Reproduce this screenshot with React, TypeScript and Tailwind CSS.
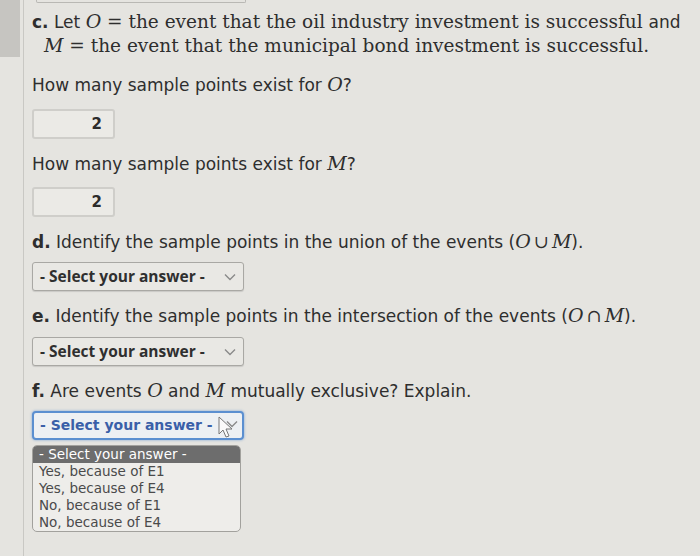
import React from 'react';

const sans = { fontFamily: '"DejaVu Sans", Verdana, sans-serif' };
const serif = { fontFamily: '"DejaVu Serif", "Liberation Serif", serif' };

const M = ({ children }: { children: React.ReactNode }) => (
  <span className="italic text-[19px]" style={serif}>{children}</span>
);

const Op = ({ children }: { children: React.ReactNode }) => (
  <span className="text-[18px] mx-[3px]" style={serif}>{children}</span>
);

const Chevron = () => (
  <svg width="12" height="8" viewBox="0 0 12 8" className="ml-auto">
    <path d="M1 1.5 L6 6.5 L11 1.5" fill="none" stroke="#8a8a8a" strokeWidth="1.4" />
  </svg>
);

const SelectBox = () => (
  <div className="w-[212px] h-[29px] border border-[#a9a8a4] rounded-[3px] bg-[#e9e8e4] flex items-center pl-[7px] pr-[7px] shadow-[0_1px_1px_rgba(0,0,0,0.12)]">
    <span className="text-[15.5px] font-bold text-[#2f2f2f]" style={{ fontFamily: '"Open Sans", sans-serif' }}>
      - Select your answer -
    </span>
    <Chevron />
  </div>
);

const NumBox = ({ value }: { value: string }) => (
  <div className="w-[83px] h-[30px] border-2 border-[#cfceca] rounded-[3px] bg-[#ebeae6] flex items-center justify-end pr-[11px]">
    <span className="text-[15px] font-bold text-[#2b2b2b]" style={sans}>{value}</span>
  </div>
);

const options = ['Yes, because of E1', 'Yes, because of E4', 'No, because of E1', 'No, because of E4'];

export default function App() {
  return (
    <div className="w-[700px] h-[556px] overflow-hidden bg-[#e5e4e0] flex text-[#2e2e2e]" style={sans}>
      {/* left margin strip */}
      <div className="w-[24px] shrink-0 border-r border-[#c9c8c4] flex">
        <div className="w-[20px] h-[57px] bg-[#c6c5c1]" />
      </div>

      <div className="flex-1 relative">
        {/* edge of the box above */}
        <div className="absolute left-[12px] top-0 w-[210px] h-[3px] border-b border-x border-[#b9b8b4] rounded-b-[2px]" />

        <div className="pl-[8px] pt-[10px]">
          <div className="leading-[23px]">
            <div className="whitespace-nowrap">
              <span className="text-[17px] font-bold">c.</span>
              <span className="text-[17px]"> Let </span>
              <M>O</M>
              <span className="text-[18.5px]" style={serif}> = the event that the oil industry investment is successful </span>
              <span className="text-[17px]">and</span>
            </div>
            <div className="whitespace-nowrap pl-[12px]">
              <M>M</M>
              <span className="text-[18.5px]" style={serif}> = the event that the municipal bond investment is successful.</span>
            </div>
          </div>

          <div className="mt-[16px] text-[17px] leading-[20px]">
            How many sample points exist for <M>O</M>?
          </div>
          <div className="mt-[14px]">
            <NumBox value="2" />
          </div>

          <div className="mt-[14px] text-[17px] leading-[20px]">
            How many sample points exist for <M>M</M>?
          </div>
          <div className="mt-[13px]">
            <NumBox value="2" />
          </div>

          <div className="mt-[14px] text-[17px] leading-[20px]">
            <span className="font-bold">d.</span> Identify the sample points in the union of the events (<M>O</M><Op>∪</Op><M>M</M>).
          </div>
          <div className="mt-[10px]">
            <SelectBox />
          </div>

          <div className="mt-[14px] text-[17px] leading-[20px]">
            <span className="font-bold">e.</span> Identify the sample points in the intersection of the events (<M>O</M><Op>∩</Op><M>M</M>).
          </div>
          <div className="mt-[11px]">
            <SelectBox />
          </div>

          <div className="mt-[14px] text-[17px] leading-[20px]">
            <span className="font-bold">f.</span> Are events <M>O</M> and <M>M</M> mutually exclusive? Explain.
          </div>

          <div className="mt-[10px] relative w-[212px]">
            <div className="w-[212px] h-[29px] border-2 border-[#5b8fd0] rounded-[4px] bg-[#edf0f3] flex items-center pl-[6px] shadow-[0_0_2px_1px_rgba(91,143,208,0.35)]">
              <span className="text-[14px] font-bold text-[#3a5fa8]" style={sans}>- Select your answer -</span>
            </div>
            {/* mouse pointer */}
            <svg className="absolute left-[186px] top-[5px]" width="16" height="24" viewBox="0 0 16 24">
              <path d="M1 1 L1 18 L5 14 L8 21 L11 20 L8 13 L14 13 Z" fill="#fafafa" stroke="#777" strokeWidth="1" strokeLinejoin="round" />
            </svg>
            <svg className="absolute left-[194px] top-[9px]" width="12" height="8" viewBox="0 0 12 8">
              <path d="M1 1.5 L6 6.5 L11 1.5" fill="none" stroke="#8a8a8a" strokeWidth="1.4" />
            </svg>
          </div>

          <div className="mt-[5px] w-[209px] border border-[#a2a19d] rounded-[5px] bg-[#eeedea] overflow-hidden text-[13.5px] leading-[17px] text-[#4a4a4a]">
            <div className="bg-[#6d6d6d] text-white pl-[6px]">- Select your answer -</div>
            {options.map((o) => (
              <div key={o} className="pl-[6px]">{o}</div>
            ))}
          </div>
        </div>
      </div>
    </div>
  );
}
